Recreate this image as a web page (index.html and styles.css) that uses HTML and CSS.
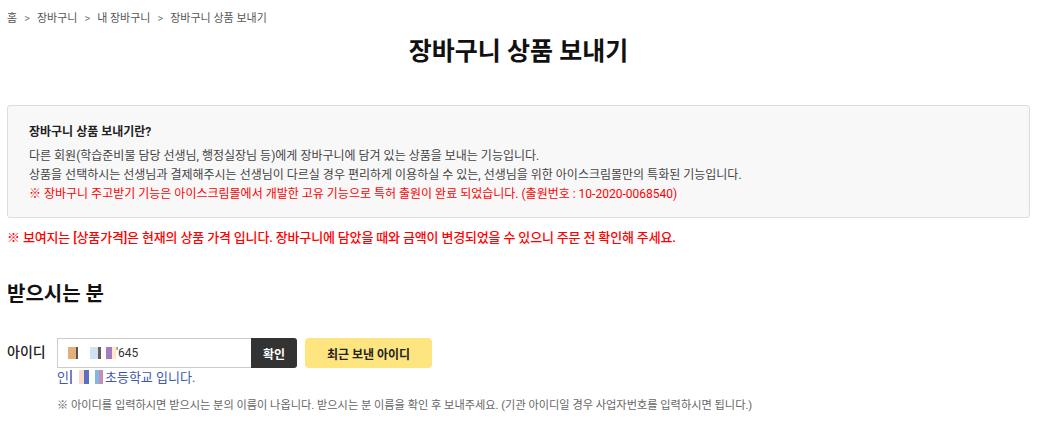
FILE: index.html
```html
<!DOCTYPE html>
<html lang="ko">
<head>
    <meta charset="UTF-8">
    <title>장바구니 상품 보내기</title>
    <link rel="stylesheet" href="styles.css">
</head>
<body>
    <div class="wrap">
        <ul class="crumb">
            <li>홈</li>
            <li class="sep">&gt;</li>
            <li>장바구니</li>
            <li class="sep">&gt;</li>
            <li>내 장바구니</li>
            <li class="sep">&gt;</li>
            <li>장바구니 상품 보내기</li>
        </ul>
        <h1 class="title">장바구니 상품 보내기</h1>

        <div class="info">
            <p class="info-tit">장바구니 상품 보내기란?</p>
            <p>다른 회원(학습준비물 담당 선생님, 행정실장님 등)에게 장바구니에 담겨 있는 상품을 보내는 기능입니다.</p>
            <p>상품을 선택하시는 선생님과 결제해주시는 선생님이 다르실 경우 편리하게 이용하실 수 있는, 선생님을 위한 아이스크림몰만의 특화된 기능입니다.</p>
            <p class="red">※ 장바구니 주고받기 기능은 아이스크림몰에서 개발한 고유 기능으로 특허 출원이 완료 되었습니다. (출원번호 : 10-2020-0068540)</p>
        </div>
        <p class="notice">※ 보여지는 [상품가격]은 현재의 상품 가격 입니다. 장바구니에 담았을 때와 금액이 변경되었을 수 있으니 주문 전 확인해 주세요.</p>

        <h2 class="sub">받으시는 분</h2>

        <div class="row">
            <span class="label">아이디</span>
            <div class="field">
                <div class="input-line">
                    <div class="input"><span class="mask"></span>'645</div>
                    <button class="btn-ok">확인</button>
                    <button class="btn-recent">최근 보낸 아이디</button>
                </div>
                <p class="result">인<span class="mask small"></span>초등학교 입니다.</p>
                <p class="help">※ 아이디를 입력하시면 받으시는 분의 이름이 나옵니다. 받으시는 분 이름을 확인 후 보내주세요. (기관 아이디일 경우 사업자번호를 입력하시면 됩니다.)</p>
            </div>
        </div>
    </div>
</body>
</html>
```

FILE: styles.css
```css
*{
    padding: 0;
    margin: 0;
    box-sizing: border-box;
}
li{
    list-style: none;
}
body{
    font-family: Roboto, "Noto Sans CJK KR", sans-serif;
    color: #222;
    background: #fff;
}
.wrap{
    padding: 10px 11px 0 7px;
}
.crumb{
    display: flex;
    gap: 7px;
    font-size: 11px;
    line-height: 18px;
    color: #555;
}
.crumb .sep{
    color: #777;
}
.title{
    text-align: center;
    font-size: 25px;
    font-weight: 700;
    line-height: 36px;
    margin-top: 6px;
    color: #111;
}
.info{
    margin-top: 35px;
    background: #f8f8f8;
    border: 1px solid #ddd;
    border-radius: 3px;
    padding: 17px 21px 13px;
    font-size: 12px;
    line-height: 19px;
    color: #444;
}
.info-tit{
    font-weight: 700;
    color: #222;
    margin-bottom: 5px;
}
.red{
    color: #f00;
}
.notice{
    margin-top: 10px;
    font-size: 13px;
    font-weight: 500;
    letter-spacing: -0.16px;
    line-height: 20px;
    color: #f00;
}
.sub{
    margin-top: 31px;
    font-size: 20px;
    font-weight: 700;
    line-height: 30px;
    color: #111;
}
.row{
    display: flex;
    margin-top: 29px;
}
.label{
    width: 50px;
    font-size: 14px;
    font-weight: 500;
    line-height: 28px;
    color: #222;
}
.input-line{
    display: flex;
    align-items: stretch;
    height: 30px;
}
.input{
    width: 194px;
    border: 1px solid #ccc;
    border-right: 0;
    padding-left: 10px;
    font-size: 12px;
    line-height: 28px;
    color: #333;
    display: flex;
    align-items: center;
}
.mask{
    display: inline-block;
    width: 48px;
    height: 12px;
    background: linear-gradient(90deg, #e2b07a 0 8px, #555 8px 10px, #fff 10px 22px, #cfe3f5 22px 30px, #6d5a5a 30px 33px, #fff 33px 38px, #a37cc0 38px 44px, #ffe9c9 44px 48px);
}
.btn-ok{
    width: 46px;
    background: #333;
    color: #fff;
    border: 0;
    border-radius: 0 3px 3px 0;
    font-family: inherit;
    font-size: 12px;
    font-weight: 700;
}
.btn-recent{
    width: 127px;
    margin-left: 8px;
    background: #ffe57f;
    color: #222;
    border: 0;
    border-radius: 4px;
    font-family: inherit;
    font-size: 12px;
    font-weight: 700;
}
.result{
    font-size: 13px;
    line-height: 20px;
    color: #3d5aa8;
}
.mask.small{
    width: 36px;
    height: 14px;
    vertical-align: -2px;
    background: linear-gradient(90deg, #fff 0 1px, #7a78d0 1px 3px, #fff 3px 10px, #f8d9d0 10px 15px, #5a6fc0 15px 20px, #fff 20px 26px, #7fb8e0 26px 30px, #c58fb5 30px 34px, #fff 34px 36px);
}
.help{
    margin-top: 9px;
    font-size: 11.2px;
    line-height: 18px;
    color: #666;
}
```
